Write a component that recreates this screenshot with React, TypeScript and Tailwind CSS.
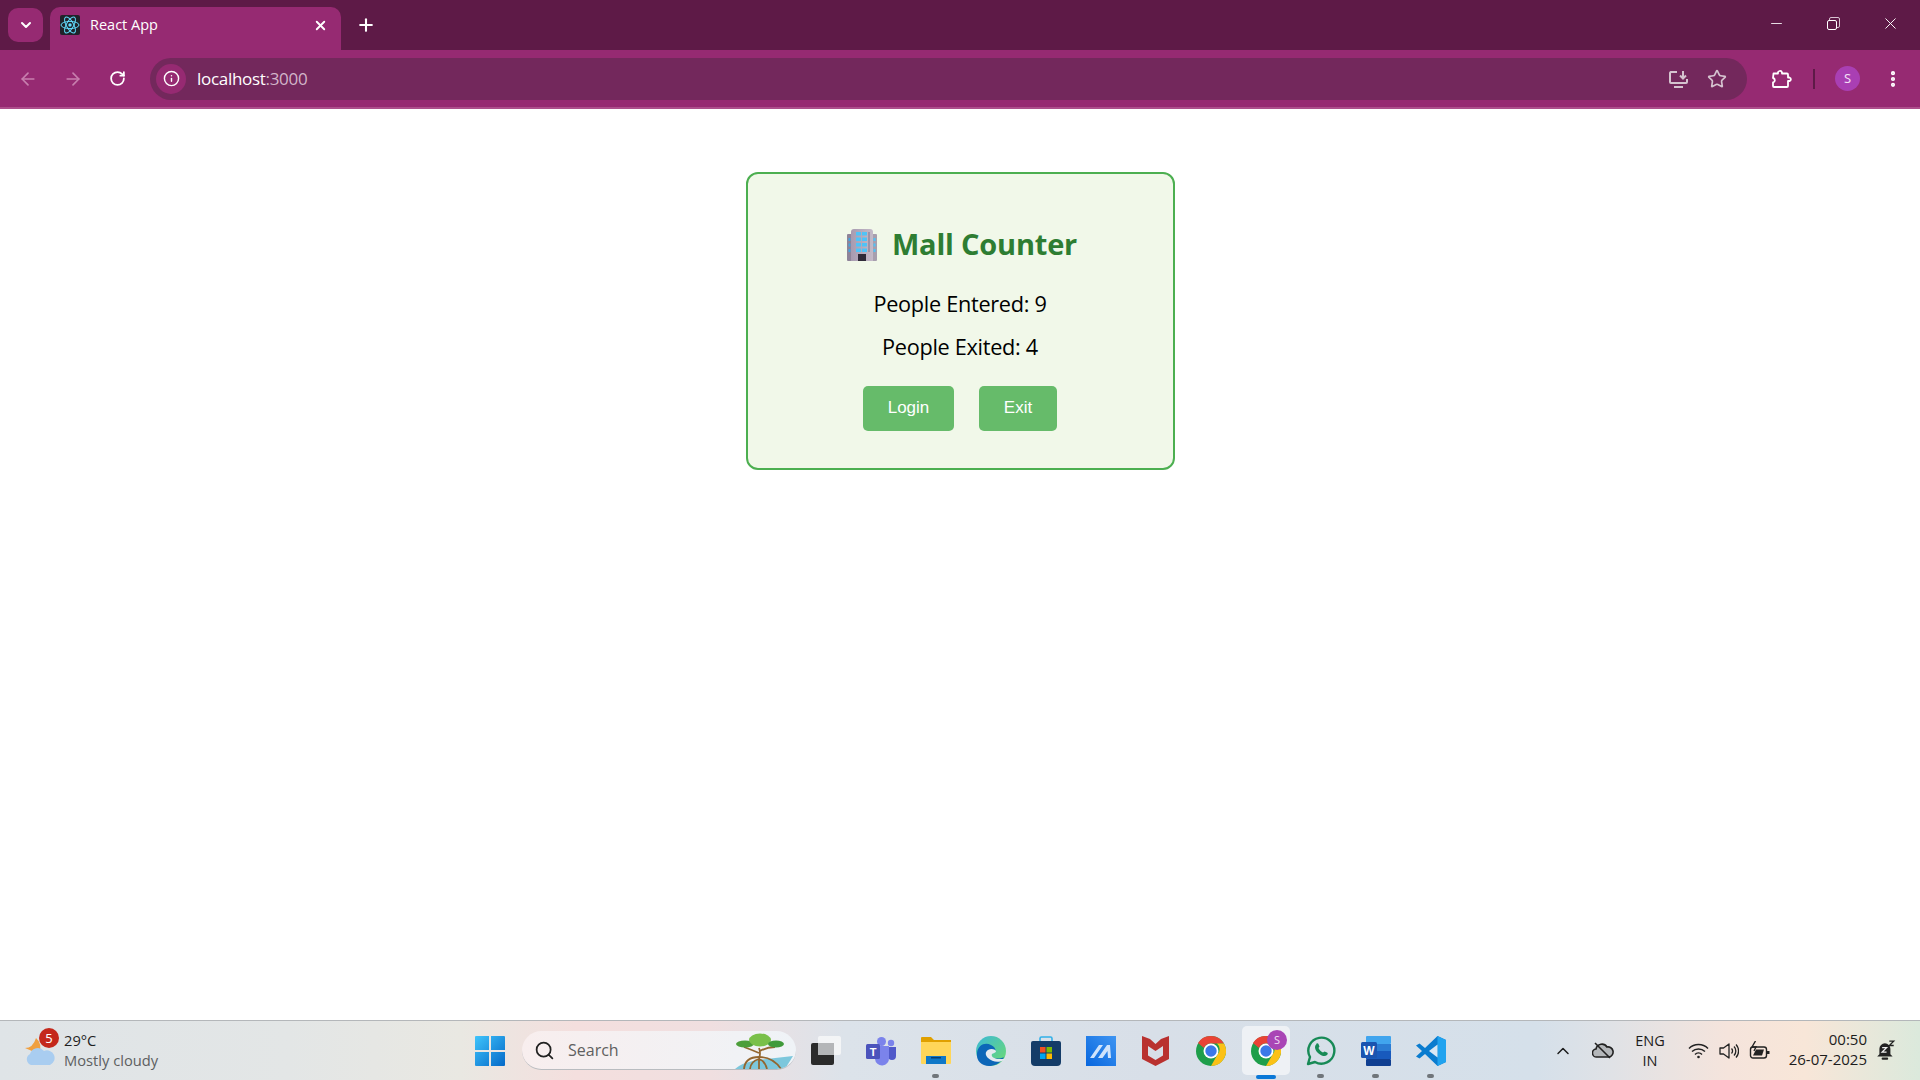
import { ChevronDown, X, Plus, ArrowLeft, ArrowRight, RotateCw, Info, Star, EllipsisVertical, Minus, Search, ChevronUp } from "lucide-react";

const SLOT = "w-[55px] h-full flex items-center justify-center relative";

function ReactFavicon() {
	return (
		<svg width="20" height="20" viewBox="0 0 20 20">
			<rect width="20" height="20" rx="2" fill="#20232a" />
			<g fill="none" stroke="#61dafb" strokeWidth="1">
				<ellipse cx="10" cy="10" rx="9" ry="3.6" />
				<ellipse cx="10" cy="10" rx="9" ry="3.6" transform="rotate(60 10 10)" />
				<ellipse cx="10" cy="10" rx="9" ry="3.6" transform="rotate(120 10 10)" />
			</g>
			<circle cx="10" cy="10" r="1.7" fill="#61dafb" />
		</svg>
	);
}

function BuildingEmoji() {
	return (
		<svg width="30" height="33" viewBox="0 0 30 33">
			<defs>
				<linearGradient id="bld" x1="0" y1="0" x2="1" y2="0">
					<stop offset="0" stopColor="#a79bb0" />
					<stop offset="1" stopColor="#c4bac8" />
				</linearGradient>
			</defs>
			<rect x="0" y="6" width="5" height="27" rx="1" fill="#8e8499" />
			<rect x="25" y="6" width="5" height="27" rx="1" fill="#a79fae" />
			<path d="M4 4a3 3 0 0 1 3-3h16a3 3 0 0 1 3 3v29H4z" fill="url(#bld)" />
			{[4, 9.5, 15, 20.5].map((y) =>
				[9, 15].map((x) => <rect key={`${x}-${y}`} x={x} y={y} width="5" height="3.5" fill="#4fc3f7" />),
			)}
			<rect x="21" y="4" width="2" height="20" fill="#9d93a8" />
			{[10, 15.5, 21].map((y) => (
				<g key={y}>
					<rect x="1.5" y={y} width="2" height="3" fill="#42a5e0" />
					<rect x="26.5" y={y} width="2" height="3" fill="#4fc3f7" />
				</g>
			))}
			<rect x="11" y="26" width="8" height="7" fill="#2f2a38" />
		</svg>
	);
}

function Windows() {
	return (
		<svg width="30" height="30" viewBox="0 0 30 30">
			<defs>
				<linearGradient id="win" x1="0" y1="0" x2="1" y2="1">
					<stop offset="0" stopColor="#3fc4fb" />
					<stop offset="1" stopColor="#0469c8" />
				</linearGradient>
			</defs>
			<path d="M1 0h13v14H0V1a1 1 0 0 1 1-1zM16 0h13a1 1 0 0 1 1 1v13H16zM0 16h14v14H1a1 1 0 0 1-1-1zM16 16h14v13a1 1 0 0 1-1 1H16z" fill="url(#win)" />
		</svg>
	);
}

function Mangrove() {
	return (
		<svg width="60" height="36" viewBox="0 0 60 36" className="absolute right-[1px] bottom-0">
			<path d="M0 36 Q6 30 22 27 L58 23 L50 36z" fill="#7cc7dc" />
			<g fill="none" stroke="#93662f" strokeWidth="1.8">
				<path d="M24 26Q26 20 24 15M24 20Q17 17 9 14M25 18Q32 14 40 14" />
				<path d="M24 24Q10 24 9 36M24 26Q16 28 15 36M24 24Q38 24 46 36M24 26Q30 28 32 36M24 26Q24 30 24 36" />
			</g>
			<g>
				<ellipse cx="10" cy="11" rx="9" ry="3.5" fill="#4d9e3a" />
				<ellipse cx="25" cy="7" rx="11" ry="6.5" fill="#79c04a" />
				<ellipse cx="41" cy="11" rx="8" ry="3.5" fill="#3f9a3a" />
			</g>
		</svg>
	);
}

function TaskView() {
	return (
		<svg width="30" height="30" viewBox="0 0 30 30">
			<rect x="0" y="7" width="23" height="22" rx="2" fill="#2b2b2b" />
			<rect x="7" y="0" width="23" height="19" rx="2" fill="#f5f6f7" fillOpacity="0.9" />
			<rect x="7" y="7" width="16" height="12" fill="#b4b6b8" />
		</svg>
	);
}

function Teams() {
	return (
		<svg width="30" height="30" viewBox="0 0 30 30">
			<circle cx="25" cy="7" r="3.2" fill="#7b83eb" />
			<circle cx="15.5" cy="5.5" r="4.5" fill="#7b83eb" />
			<path d="M20 11h10v9a4 4 0 0 1-8 0z" fill="#5059c9" />
			<path d="M8 10h15v12a7 7 0 0 1-14 1z" fill="#7b83eb" />
			<rect x="0" y="8" width="14" height="15" rx="1.5" fill="#4b53bc" />
			<text x="7" y="20" textAnchor="middle" fontSize="11" fontWeight="700" fill="#fff" fontFamily="Liberation Sans, sans-serif">T</text>
		</svg>
	);
}

function Explorer() {
	return (
		<svg width="30" height="27" viewBox="0 0 30 27">
			<path d="M0 1a1 1 0 0 1 1-1h9l3 3h17v5H0z" fill="#e0a000" />
			<path d="M0 5h30v21a1 1 0 0 1-1 1H1a1 1 0 0 1-1-1z" fill="#ffd659" />
			<path d="M5 19h20v8H5z" fill="#0f78c8" />
			<rect x="10" y="20" width="10" height="1.5" fill="#0b3f73" />
		</svg>
	);
}

function Edge() {
	return (
		<svg width="30" height="30" viewBox="0 0 30 30">
			<defs>
				<linearGradient id="edg" x1="0" y1="0" x2="1" y2="1">
					<stop offset="0" stopColor="#3bb8d8" />
					<stop offset="1" stopColor="#6fdc6e" />
				</linearGradient>
			</defs>
			<circle cx="15" cy="15" r="15" fill="url(#edg)" />
			<path d="M1 17C2 9 9 6 15 9c5 2 6 7 2 8-3 0-3 2-1 4 3 2 8 2 12 0-4 7-10 9-15 9C6 30 0 25 1 17z" fill="#0c66b8" />
			<path d="M12 14c3-2 7-1 8 1 0 2-3 2-4 3-1 2 1 4 5 5h8l-1 1c-5 3-12 2-16-2-3-3-3-6 0-8z" fill="#e5eaf0" />
		</svg>
	);
}

function Store() {
	return (
		<svg width="30" height="30" viewBox="0 0 30 30">
			<path d="M9 5V2.5A1.500 1.500 0 0 1 10.500 1h9A1.500 1.500 0 0 1 21 2.500V5" fill="none" stroke="#32b0e8" strokeWidth="1.6" />
			<path d="M2 5h26a2 2 0 0 1 2 2v19a4 4 0 0 1-4 4H4a4 4 0 0 1-4-4V7a2 2 0 0 1 2-2z" fill="#143c68" />
			<rect x="9" y="11" width="5.5" height="5.5" fill="#f25022" />
			<rect x="15.5" y="11" width="5.5" height="5.5" fill="#7fba00" />
			<rect x="9" y="17.5" width="5.5" height="5.5" fill="#00a4ef" />
			<rect x="15.5" y="17.5" width="5.5" height="5.5" fill="#ffb900" />
		</svg>
	);
}

function MaLogo() {
	return (
		<svg width="30" height="30" viewBox="0 0 30 30">
			<defs>
				<linearGradient id="mal" x1="0" y1="1" x2="1" y2="0">
					<stop offset="0" stopColor="#0766de" />
					<stop offset="1" stopColor="#3f95f2" />
				</linearGradient>
			</defs>
			<rect width="30" height="30" fill="url(#mal)" />
			<path d="M4 22 13 9h4L8 22zM12 22 21 9h3l1 13h-3l-.5-7-5 7z" fill="#cfe3fb" />
		</svg>
	);
}

function McAfee() {
	return (
		<svg width="27" height="30" viewBox="0 0 27 30">
			<path fillRule="evenodd" d="M0 0 8 3 13.500 8 19 3 27 0V23L13.500 30 0 23zM6 10V19.500L13.500 24 21 19.500V10L13.500 15z" fill="#b9312f" />
		</svg>
	);
}

function Chrome() {
	return (
		<svg width="30" height="30" viewBox="0 0 30 30">
			<circle cx="15" cy="15" r="15" fill="#1e9e4a" />
			<path d="M15 0a15 15 0 0 1 13 7.500H15a7.500 7.500 0 0 0-7 4.500L2 7A15 15 0 0 1 15 0z" fill="#e94335" />
			<path d="M28 7.500A15 15 0 0 1 15 30l6.500-11.500A7.500 7.500 0 0 0 21 7.500z" fill="#fbc116" />
			<circle cx="15" cy="15" r="7.5" fill="#fff" />
			<circle cx="15" cy="15" r="5.7" fill="#3b78e7" />
		</svg>
	);
}

function WhatsApp() {
	return (
		<svg width="30" height="30" viewBox="0 0 30 30">
			<path d="M2 28l2-7A13 13 0 1 1 9 26z" fill="none" stroke="#178a56" strokeWidth="2.4" strokeLinejoin="round" />
			<path d="M10 8c1-1 2-1 2.500 0l1 2.500-1 1.500c1 2 2.500 3.500 4.500 4.500l1.500-1 2.500 1c1 .5 1 1.500 0 2.500-1.500 1.500-4 1.500-7-.5s-5-4.500-5-7c0-1.500.5-2.500 1.500-3.500z" fill="#178a56" />
		</svg>
	);
}

function Word() {
	return (
		<svg width="30" height="30" viewBox="0 0 30 30">
			<rect x="5" y="0" width="25" height="8" rx="1" fill="#41a5ee" />
			<rect x="5" y="8" width="25" height="7" fill="#2b7cd3" />
			<rect x="5" y="15" width="25" height="8" fill="#185abd" />
			<rect x="5" y="23" width="25" height="7" rx="1" fill="#103f91" />
			<rect x="0" y="6" width="16" height="16" rx="1.5" fill="#1a54b0" />
			<text x="8" y="18.5" textAnchor="middle" fontSize="12" fontWeight="700" fill="#fff" fontFamily="Liberation Sans, sans-serif">W</text>
		</svg>
	);
}

function VsCode() {
	return (
		<svg width="30" height="30" viewBox="0 0 30 30">
			<path d="M21.500 0 30 4v22l-8.500 4L9 18l-5.500 4.500L0 20.500 6 15 0 9.500l3.500-2L9 12z" fill="#0a7ccf" />
			<path d="M21.500 0 30 4v22l-8.500 4z" fill="#21a3ef" />
			<path d="M21.500 8.500v13L13 15z" fill="#f0f4f8" fillOpacity="0.9" />
		</svg>
	);
}

function Pip() {
	return <div className="absolute bottom-[2px] w-[7px] h-[4px] rounded-full bg-[#70757a]" />;
}

export default function App() {
	return (
		<div className="w-full h-screen flex flex-col overflow-hidden bg-white font-['Noto_Sans',sans-serif]">
			{/* tab strip */}
			<div className="h-[50px] shrink-0 bg-[#5e1a47] flex items-end text-white">
				<div className="self-start mt-[8px] ml-[8px] w-[35px] h-[34px] rounded-[10px] bg-[#962a72] flex items-center justify-center">
					<ChevronDown size={16} strokeWidth={3} />
				</div>
				<div className="ml-[7px] w-[291px] h-[43px] bg-[#962a72] rounded-t-[10px] flex items-center pl-[10px] pr-[13px] pb-[7px]">
					<ReactFavicon />
					<span className="ml-[10px] text-[14.5px] font-['Open_Sans',sans-serif] flex-1">React App</span>
					<X size={15} strokeWidth={3} />
				</div>
				<div className="self-start mt-[15px] ml-[15px]">
					<Plus size={20} strokeWidth={2.5} />
				</div>
				<div className="ml-auto self-start flex items-center h-[46px]">
					<div className="w-[56px] flex justify-center mr-[1px]"><Minus size={17} strokeWidth={1.2} /></div>
					<div className="w-[56px] flex justify-center">
						<div className="relative w-[13px] h-[13px]">
							<div className="absolute right-0 top-0 w-[11px] h-[11px] border border-[#d9c3d2] rounded-[2px]" />
							<div className="absolute left-0 bottom-0 w-[10px] h-[10px] border border-white rounded-[2px] bg-[#5e1a47]" />
						</div>
					</div>
					<div className="w-[59px] flex justify-center"><X size={19} strokeWidth={1.2} /></div>
				</div>
			</div>
			{/* toolbar */}
			<div className="h-[59px] shrink-0 bg-[#962a72] border-b-[2px] border-[#ad4f8c] flex items-center text-white">
				<ArrowLeft size={20} className="ml-[18px] text-[#c77fae]" />
				<ArrowRight size={20} className="ml-[25px] text-[#c77fae]" />
				<RotateCw size={17} strokeWidth={2.5} className="ml-[26px]" />
				<div className="ml-[24px] w-[1597px] h-[42px] rounded-full bg-[#73285c] flex items-center pl-[6px] pr-[20px]">
					<div className="w-[30px] h-[30px] rounded-full bg-[#962a72] flex items-center justify-center">
						<Info size={17} strokeWidth={2} />
					</div>
					<span className="ml-[11px] text-[17px] leading-none font-['Open_Sans',sans-serif] tracking-[-0.3px]">
						localhost<span className="text-[#d2b5c9]">:3000</span>
					</span>
					<div className="ml-auto flex items-center gap-[18px] text-[#d5c3cf]">
						<svg width="21" height="20" viewBox="0 0 21 20" fill="none" stroke="currentColor" strokeWidth="2">
							<path d="M9 3H3a2 2 0 0 0-1 1v9a1 1 0 0 0 1 1h15a1 1 0 0 0 1-1V10M6 18h9M15 2v7M12 6.500l3 3 3-3" />
						</svg>
						<Star size={20} strokeWidth={2} />
					</div>
				</div>
				<svg width="20" height="20" viewBox="0 0 20 20" fill="none" stroke="currentColor" strokeWidth="1.8" strokeLinejoin="round" className="ml-[25px]">
					<path d="M1.500 4.500h4.500a2 2 0 0 1 4-1v1h5a1 1 0 0 1 1 1v3h1.500a1.800 1.800 0 0 1 0 3.500H16v5a1 1 0 0 1-1 1H2a1 1 0 0 1-1-1v-3.500a2.300 2.300 0 0 0 0-4.500z" />
				</svg>
				<div className="ml-[21px] w-[2px] h-[20px] bg-[#5e1a47]" />
				<div className="ml-[20px] w-[25px] h-[25px] rounded-full bg-[#a93fb3] flex items-center justify-center text-[13px] text-[#f3dff5]">
					S
				</div>
				<EllipsisVertical size={20} strokeWidth={3} className="ml-[23px]" />
			</div>
			{/* page */}
			<main className="flex-1 flex flex-col items-center pt-[63px] bg-white">
				<div className="w-[429px] h-[298px] rounded-[12px] border-2 border-[#4caf50] bg-[#f1f8e9] flex flex-col items-center">
					<h2 className="mt-[50px] ml-[4px] h-[40px] flex items-center text-[29px] font-bold text-[#2e7d32] font-['Open_Sans',sans-serif] tracking-[-0.2px]">
						<BuildingEmoji />
						<span className="ml-[15px]">Mall Counter</span>
					</h2>
					<p className="mt-[26px] text-[21.7px] leading-[28px] text-black font-['Open_Sans',sans-serif] tracking-[-0.3px]">People Entered: 9</p>
					<p className="mt-[15px] text-[21.7px] leading-[28px] text-black font-['Open_Sans',sans-serif] tracking-[-0.3px]">People Exited: 4</p>
					<div className="mt-[25px] flex gap-[25px] font-['Liberation_Sans',sans-serif] text-[17px] text-white">
						<button className="w-[91px] h-[45px] pb-[2px] rounded-[5px] bg-[#66bb6a]">Login</button>
						<button className="w-[78px] h-[45px] pb-[2px] rounded-[5px] bg-[#66bb6a]">Exit</button>
					</div>
				</div>
			</main>
			{/* taskbar */}
			<div className="h-[60px] shrink-0 border-t border-[#b4b7ba] flex items-center relative bg-[linear-gradient(90deg,#dfe4e7_0%,#e3e6e6_15%,#e9e8e2_24%,#f4dfde_30%,#f0dfe0_37%,#dce3ea_44%,#d8dfe8_60%,#d5e0ea_80%,#e0e2e6_84%,#f5e4dc_90%,#f8e6d8_94%,#dbe9dc_100%)]">
				<div className="w-[475px] shrink-0 flex items-center pl-[25px]">
					<div className="relative w-[30px] h-[30px]">
						<svg width="30" height="30" viewBox="0 0 30 30">
							<path d="M0 12 Q8 12 11 2 Q18 8 14 18z" fill="#f0a040" />
							<path d="M6 29a6 6 0 0 1-1-11 8 8 0 0 1 14-3 7 7 0 0 1 6 14z" fill="#a9cdf0" />
						</svg>
						<div className="absolute -top-[8px] left-[14px] w-[20px] h-[20px] rounded-full bg-[#c4281c] text-white text-[13px] leading-[20px] text-center">5</div>
					</div>
					<div className="ml-[9px] -mt-[2px] text-[14.7px] leading-[20px] font-['Open_Sans',sans-serif]">
						<div className="text-[#1f1f1f]">29°C</div>
						<div className="text-[#5d5f61]">Mostly cloudy</div>
					</div>
				</div>
				<Windows />
				<div className="ml-[17px] w-[274px] h-[39px] rounded-full bg-[linear-gradient(90deg,#f8eeee,#eff3f7)] border-b border-[#b9bcc0] flex items-center pl-[12px] relative overflow-hidden">
					<Search size={21} strokeWidth={2} className="text-[#222]" />
					<span className="ml-[13px] text-[16px] text-[#5f5f5f] font-['Open_Sans',sans-serif]">Search</span>
					<Mangrove />
				</div>
				<div className="flex h-full ml-[2px]">
					<div className={SLOT}><TaskView /></div>
					<div className={SLOT}><Teams /></div>
					<div className={SLOT}><Explorer /><Pip /></div>
					<div className={SLOT}><Edge /></div>
					<div className={SLOT}><Store /></div>
					<div className={SLOT}><MaLogo /></div>
					<div className={SLOT}><McAfee /></div>
					<div className={SLOT}><Chrome /></div>
					<div className={SLOT}>
						<div className="absolute left-[4px] top-[5px] w-[48px] h-[49px] rounded-[5px] bg-[#eef1f5]" />
						<div className="relative"><Chrome /></div>
						<div className="absolute -mt-[14px] top-[23px] left-[29px] w-[20px] h-[20px] rounded-full bg-[#a945b5] text-[#efd9f2] text-[11px] leading-[20px] text-center">S</div>
						<div className="absolute bottom-[1px] w-[20px] h-[4px] rounded-full bg-[#0a78d7]" />
					</div>
					<div className={SLOT}><WhatsApp /><Pip /></div>
					<div className={SLOT}><Word /><Pip /></div>
					<div className={SLOT}><VsCode /><Pip /></div>
				</div>
				<div className="flex-1 flex items-center text-[#1c1c1c] font-['Open_Sans',sans-serif]">
					<ChevronUp size={20} strokeWidth={1.8} className="ml-[95px]" />
					<svg width="22" height="20" viewBox="0 0 22 20" fill="none" stroke="#222" strokeWidth="1.6" className="ml-[19px]">
						<path d="M5 16a4 4 0 0 1-1-8 6 6 0 0 1 11-2 5 5 0 0 1 2 10z" fill="#b4b7ba" />
						<path d="M3 2l15 15" />
					</svg>
					<div className="ml-[18px] w-[36px] text-[14.5px] leading-[20px] text-center"><div>ENG</div><div>IN</div></div>
					<svg width="21" height="16" viewBox="0 0 21 16" fill="none" stroke="#222" strokeWidth="1.5" className="ml-[20px]">
						<path d="M1 5.500a13.500 13.500 0 0 1 19 0M4 8.500a9.500 9.500 0 0 1 13 0M7 11.500a5 5 0 0 1 7 0" />
						<circle cx="10.5" cy="14" r="1.3" fill="#222" stroke="none" />
					</svg>
					<svg width="20" height="18" viewBox="0 0 20 18" fill="none" stroke="#222" strokeWidth="1.3" className="ml-[10px]">
						<path d="M1 6h3.500L10 2v14l-5.500-4H1z" strokeLinejoin="round" />
						<path d="M12.500 6.500a3.500 3.500 0 0 1 0 5M15 4.500a6.500 6.500 0 0 1 0 9M17 2.500a9.500 9.500 0 0 1 0 13" />
					</svg>
					<svg width="21" height="20" viewBox="0 0 21 20" fill="none" stroke="#222" strokeWidth="1.4" className="ml-[10px]">
						<rect x="1.5" y="6" width="16" height="11" rx="2.5" />
						<path d="M4 14.500 7 8.500h8l-2 6z" fill="#222" stroke="none" />
						<path d="M6.500 0 3 6h4l-2 4" fill="none" />
						<rect x="18" y="10" width="2.5" height="3" fill="#222" stroke="none" />
					</svg>
					<div className="ml-auto text-[15px] leading-[20px] text-right -mt-[3px] mr-[9px]"><div>00:50</div><div>26-07-2025</div></div>
					<svg width="20" height="22" viewBox="0 0 18 20" className="mr-[24px]">
						<path d="M8 3a5 5 0 0 1 5 5v5l2 2H1l2-2V8a5 5 0 0 1 5-5z" fill="#222" />
						<rect x="5" y="16" width="6" height="2" rx="1" fill="#222" />
						<path d="M12 1h4l-4 4h4" fill="none" stroke="#222" strokeWidth="1.2" />
						<path d="M5.500 7h4l-4 4h4" fill="none" stroke="#eee" strokeWidth="1.2" />
					</svg>
				</div>
			</div>
		</div>
	);
}
